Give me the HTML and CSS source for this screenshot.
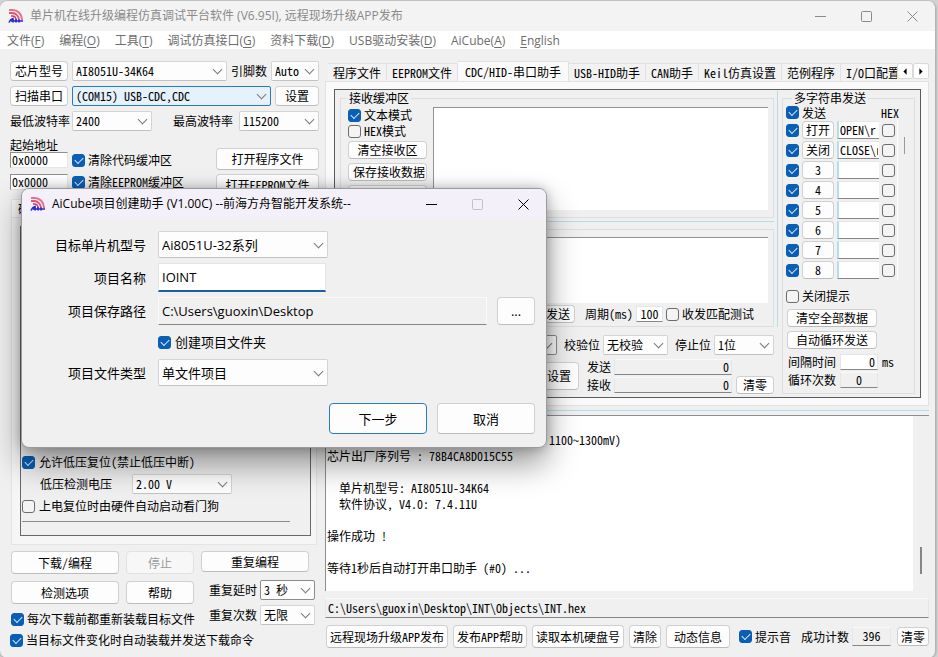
FILE: index.html
```html
<!DOCTYPE html>
<html lang="zh-CN">
<head>
<meta charset="utf-8">
<title>单片机在线升级编程仿真调试平台软件</title>
<link rel="stylesheet" href="styles.css">
</head>
<body>
<svg class="defs" aria-hidden="true">
  <symbol id="logo" viewBox="0 0 16 16">
    <g fill="none">
      <path d="M1 2H4.500A9.500 9.500 0 0 1 14 11.500V12" stroke="#e8708c" stroke-width="2"/>
      <path d="M1 5H4A7 7 0 0 1 11 12" stroke="#e0527a" stroke-width="1.800"/>
      <path d="M3 8H4.500A3.500 3.500 0 0 1 8 11.500" stroke="#c8386f" stroke-width="1.600"/>
      <path d="M1 14.500C2 12 3 11 5 10.500V14.500M8 11V14.500M11 11.500V14.500M3 13H15" stroke="#2229d0" stroke-width="1.600"/>
    </g>
  </symbol>
</svg>
<div class="window">
  <header class="titlebar">
    <svg class="logo"><use href="#logo"/></svg>
    <h1>单片机在线升级编程仿真调试平台软件 (V6.95I), 远程现场升级APP发布</h1>
    <div class="winbtns">
      <button aria-label="最小化"><svg viewBox="0 0 11 11"><path d="M0 5.5H11"/></svg></button>
      <button aria-label="最大化"><svg viewBox="0 0 11 11"><rect x=".5" y=".5" width="10" height="10" rx="1"/></svg></button>
      <button aria-label="关闭"><svg viewBox="0 0 11 11"><path d="M.5 .5L10.5 10.5M10.5 .5L.5 10.5"/></svg></button>
    </div>
  </header>
  <nav class="menubar">
    <a href="#">文件(<u>F</u>)</a><a href="#">编程(<u>O</u>)</a><a href="#">工具(<u>T</u>)</a><a href="#">调试仿真接口(<u>G</u>)</a><a href="#">资料下载(<u>D</u>)</a><a href="#">USB驱动安装(<u>D</u>)</a><a href="#">AiCube(<u>A</u>)</a><a href="#"><u>E</u>nglish</a>
  </nav>

  <main class="main">
    <section class="left">
      <div class="settings">
        <div class="row">
          <button class="btn w58">芯片型号</button>
          <span class="combo grow"><select aria-label="芯片型号"><option>AI8051U-34K64</option></select></span>
          <label for="pins">引脚数</label>
          <span class="combo w48"><select id="pins"><option>Auto</option></select></span>
        </div>
        <div class="row">
          <button class="btn w58">扫描串口</button>
          <span class="combo grow active"><select aria-label="串口"><option>(COM15) USB-CDC,CDC</option></select></span>
          <button class="btn w44">设置</button>
        </div>
        <div class="row">
          <label class="w58" for="minb">最低波特率</label>
          <span class="combo w80"><select id="minb"><option>2400</option></select></span>
          <label class="push" for="maxb">最高波特率</label>
          <span class="combo w80"><select id="maxb"><option>115200</option></select></span>
        </div>
      </div>
      <div class="address">
        <div class="addr-fields">
          <div class="caption">起始地址</div>
          <div class="row">
            <input class="field w58" aria-label="代码起始地址" value="0x0000">
            <label class="check"><input type="checkbox" checked>清除代码缓冲区</label>
          </div>
          <div class="row">
            <input class="field w58" aria-label="EEPROM起始地址" value="0x0000">
            <label class="check"><input type="checkbox" checked>清除EEPROM缓冲区</label>
          </div>
        </div>
        <div class="addr-buttons">
          <button class="btn">打开程序文件</button>
          <button class="btn">打开EEPROM文件</button>
        </div>
      </div>

      <div class="hardware">
        <div class="hw-tab">硬件选项</div>
        <div class="hw-page">
          <div class="hw-panel">
            <div class="hw-list">
              <label class="check"><input type="checkbox" checked>允许低压复位(禁止低压中断)</label>
              <div class="row hw-volt">
                <label for="volt">低压检测电压</label>
                <span class="combo w100"><select id="volt"><option>2.00 V</option></select></span>
              </div>
              <label class="check"><input type="checkbox">上电复位时由硬件自动启动看门狗</label>
            </div>
          </div>
        </div>
      </div>

      <div class="actions">
        <div class="act-main">
          <div class="act-grid">
            <button class="btn">下载/编程</button><button class="btn" disabled>停止</button>
            <button class="btn">检测选项</button><button class="btn">帮助</button>
          </div>
          <label class="check"><input type="checkbox" checked>每次下载前都重新装载目标文件</label>
        </div>
        <div class="act-repeat">
          <button class="btn">重复编程</button>
          <div class="row"><label for="delay">重复延时</label><span class="combo dark"><select id="delay"><option>3 秒</option></select></span></div>
          <div class="row"><label for="times">重复次数</label><span class="combo"><select id="times"><option>无限</option></select></span></div>
        </div>
      </div>
      <label class="check last"><input type="checkbox" checked>当目标文件变化时自动装载并发送下载命令</label>
    </section>

    <section class="right">
      <div class="tabs">
        <div class="tablist">
          <button>程序文件</button><button>EEPROM文件</button><button class="on">CDC/HID-串口助手</button><button>USB-HID助手</button><button>CAN助手</button><button>Keil仿真设置</button><button>范例程序</button><button class="cut">I/O口配置</button>
        </div>
        <div class="spin">
          <button aria-label="向左"><svg viewBox="0 0 5 8"><path d="M4.500 0V8L.5 4Z"/></svg></button>
          <button aria-label="向右"><svg viewBox="0 0 5 8"><path d="M.5 0V8L4.500 4Z"/></svg></button>
        </div>
      </div>
      <div class="page">
        <div class="serial">
          <div class="comm">
            <div class="buffers">
              <fieldset class="group recv">
                <legend>接收缓冲区</legend>
                <div class="recv-body">
                  <div class="recv-tools">
                    <label class="check"><input type="checkbox" checked>文本模式</label>
                    <label class="check"><input type="checkbox">HEX模式</label>
                    <button class="btn">清空接收区</button>
                    <button class="btn">保存接收数据</button>
                    <button class="btn">复制接收数据</button>
                  </div>
                  <textarea class="area" aria-label="接收缓冲区"></textarea>
                </div>
              </fieldset>
              <div class="splitter"></div>
              <div class="group send">
                <textarea class="area" aria-label="发送缓冲区"></textarea>
                <div class="row send-row">
                  <button class="btn auto">自动发送</button>
                  <label for="period">周期(ms)</label>
                  <input class="field num" id="period" value="100">
                  <label class="check"><input type="checkbox">收发匹配测试</label>
                </div>
              </div>
            </div>
            <div class="row port-row">
              <span class="combo dark w80"><select aria-label="波特率"><option></option></select></span>
              <label for="parity">校验位</label>
              <span class="combo w65"><select id="parity"><option>无校验</option></select></span>
              <label for="stop">停止位</label>
              <span class="combo w60"><select id="stop"><option>1位</option></select></span>
            </div>
            <div class="row count-row">
              <button class="btn setup">设置</button>
              <div class="counters">
                <label>发送<input class="field gray" value="0" readonly></label>
                <label>接收<input class="field gray" value="0" readonly></label>
              </div>
              <button class="btn clear">清零</button>
            </div>
          </div>
          <fieldset class="group multi">
            <legend>多字符串发送</legend>
            <div class="multi-head"><label class="check"><input type="checkbox" checked>发送</label><span>HEX</span></div>
            <div class="multi-list">
              <div class="multi-rows">
                <div class="mrow"><input type="checkbox" aria-label="启用 1" checked><button class="btn">打开</button><input class="field" aria-label="字符串 1" value="OPEN\r"><input type="checkbox" aria-label="HEX 1"></div>
                <div class="mrow"><input type="checkbox" aria-label="启用 2" checked><button class="btn">关闭</button><input class="field" aria-label="字符串 2" value="CLOSE\r"><input type="checkbox" aria-label="HEX 2"></div>
                <div class="mrow"><input type="checkbox" aria-label="启用 3" checked><button class="btn">3</button><input class="field" aria-label="字符串 3"><input type="checkbox" aria-label="HEX 3"></div>
                <div class="mrow"><input type="checkbox" aria-label="启用 4" checked><button class="btn">4</button><input class="field" aria-label="字符串 4"><input type="checkbox" aria-label="HEX 4"></div>
                <div class="mrow"><input type="checkbox" aria-label="启用 5" checked><button class="btn">5</button><input class="field" aria-label="字符串 5"><input type="checkbox" aria-label="HEX 5"></div>
                <div class="mrow"><input type="checkbox" aria-label="启用 6" checked><button class="btn">6</button><input class="field" aria-label="字符串 6"><input type="checkbox" aria-label="HEX 6"></div>
                <div class="mrow"><input type="checkbox" aria-label="启用 7" checked><button class="btn">7</button><input class="field" aria-label="字符串 7"><input type="checkbox" aria-label="HEX 7"></div>
                <div class="mrow"><input type="checkbox" aria-label="启用 8" checked><button class="btn">8</button><input class="field" aria-label="字符串 8"><input type="checkbox" aria-label="HEX 8"></div>
              </div>
              <i class="multi-thumb"></i>
            </div>
            <div class="multi-foot">
              <label class="check"><input type="checkbox">关闭提示</label>
              <button class="btn">清空全部数据</button>
              <button class="btn">自动循环发送</button>
              <div class="timing">
                <label>间隔时间<input class="field" value="0"><span>ms</span></label>
                <label>循环次数<input class="field gray mid" value="0" readonly></label>
              </div>
            </div>
          </fieldset>
        </div>
      </div>
      <div class="splitter wide"></div>
      <div class="log">
        <textarea readonly aria-label="输出信息">

                                     1100~1300mV)
芯片出厂序列号 : 78B4CA8D015C55

  单片机型号: AI8051U-34K64
  软件协议, V4.0: 7.4.11U

操作成功 !

等待1秒后自动打开串口助手 (#0) ...</textarea>
        <div class="scroll"><i></i></div>
      </div>
      <input class="field gray path" aria-label="目标文件" value="C:\Users\guoxin\Desktop\INT\Objects\INT.hex" readonly>
      <div class="footer">
        <button class="btn">远程现场升级APP发布</button>
        <button class="btn">发布APP帮助</button>
        <button class="btn">读取本机硬盘号</button>
        <button class="btn">清除</button>
        <button class="btn info">动态信息</button>
        <label class="check beep"><input type="checkbox" checked>提示音</label>
        <label class="total">成功计数<input class="field gray mid" value="396" readonly></label>
        <button class="btn small">清零</button>
      </div>
    </section>
  </main>
</div>

<div class="dialog" role="dialog" aria-labelledby="dlg-title">
  <header class="dlg-title">
    <svg class="logo"><use href="#logo"/></svg>
    <h2 id="dlg-title">AiCube项目创建助手 (V1.00C) --前海方舟智能开发系统--</h2>
    <div class="winbtns">
      <button aria-label="最小化"><svg viewBox="0 0 11 11"><path d="M0 5.500H11"/></svg></button>
      <button aria-label="最大化" disabled><svg viewBox="0 0 11 11"><rect x=".5" y=".5" width="10" height="10" rx="1"/></svg></button>
      <button aria-label="关闭"><svg viewBox="0 0 11 11"><path d="M.5 .5L10.500 10.500M10.500 .5L.5 10.500"/></svg></button>
    </div>
  </header>
  <form class="form">
    <label for="mcu">目标单片机型号</label>
    <span class="combo"><select id="mcu"><option>Ai8051U-32系列</option></select></span>
    <label for="name">项目名称</label>
    <input class="name" id="name" value="IOINT">
    <label for="dir">项目保存路径</label>
    <div class="dir"><input id="dir" value="C:\Users\guoxin\Desktop" readonly><button type="button" class="btn">...</button></div>
    <label class="check mkdir"><input type="checkbox" checked>创建项目文件夹</label>
    <label for="ftype">项目文件类型</label>
    <span class="combo"><select id="ftype"><option>单文件项目</option></select></span>
    <div class="dlg-actions">
      <button type="button" class="btn primary">下一步</button>
      <button type="button" class="btn">取消</button>
    </div>
  </form>
</div>
</body>
</html>
```
FILE: styles.css
```css
* { box-sizing: border-box; }
body {
  margin: 0;
  min-height: 100vh;
  display: flex;
  background: #d2d2d2;
  color: #000;
  font: 12px/14px "Noto Sans CJK SC", sans-serif;
  font-feature-settings: "hwid";
}
button, input, select, textarea { font: inherit; font-feature-settings: inherit; color: inherit; margin: 0; }
.defs { position: absolute; width: 0; height: 0; }
.window {
  flex: 1;
  min-width: 0;
  display: flex;
  flex-direction: column;
  margin: 1px 2px 2px 0;
  background: #f0f0f0;
  border: solid #b4b4b4;
  border-width: 0 1px 1px 0;
  border-radius: 8px;
  box-shadow: 0 0 0 1px #c0c0c0;
  overflow: hidden;
}

/* Title bars and menu */
.titlebar, .dlg-title { display: flex; align-items: center; gap: 6px; font-feature-settings: normal; font-family: "Open Sans", "Noto Sans CJK SC", sans-serif; }
.titlebar { height: 30px; padding-left: 8px; background: #f3f3f3; color: #8a8a8a; }
.titlebar h1, .dlg-title h2 { margin: 0; flex: 1; font-size: 12px; font-weight: 400; white-space: nowrap; }
.logo { width: 16px; height: 16px; flex: none; }
.winbtns { display: flex; }
.winbtns button { width: 46px; height: 30px; padding: 0; border: 0; background: none; display: grid; place-items: center; }
.winbtns button:disabled { color: #c4c0c8; }
.winbtns svg { width: 11px; height: 11px; fill: none; stroke: currentColor; }
.menubar { display: flex; gap: 15px; height: 18px; padding: 1px 0 0 7px; background: #fff; align-items: center; font-family: "Open Sans", "Noto Sans CJK SC", sans-serif; font-feature-settings: normal; }
.menubar a { color: #6d6d6d; text-decoration: none; white-space: nowrap; }
.menubar u { text-underline-offset: 2px; }

/* Shared controls */
.row { display: flex; align-items: center; gap: 3px; }
.row label, .check { white-space: nowrap; }
.grow { flex: 1; }
.push { margin-left: auto; }
.w44 { width: 44px; } .w48 { width: 48px; } .w58 { width: 58px; } .w60 { width: 60px; }
.w65 { width: 65px; } .w80 { width: 80px; } .w100 { width: 100px; }
.btn { height: 20px; padding: 0 4px; border: 1px solid #d0d0d0; border-bottom-color: #bcbcbc; border-radius: 4px; background: #fdfdfd; white-space: nowrap; flex: none; line-height: 14px; }
.btn:disabled { color: #9c9c9c; background: #f7f7f7; border-color: #e2e2e2; }
.combo { position: relative; display: inline-flex; height: 20px; min-width: 0; }
.combo select { appearance: none; width: 100%; height: 100%; padding: 0 3px; border: 1px solid #d4d4d4; border-bottom-color: #c2c2c2; border-radius: 2px; background: #fdfdfd; text-overflow: clip; }
.combo::after { content: ""; position: absolute; right: 6px; top: 50%; width: 6px; height: 6px; margin-top: -5px; border: solid #7a7a7a; border-width: 0 1px 1px 0; transform: rotate(45deg); pointer-events: none; }
.combo.active select { background: #e5f1fb; border-color: #2a7ac0; }
.combo.dark select { border-color: #8c8c8c; }
.field { height: 16px; min-width: 0; padding: 0 2px 2px; border: 1px solid #e6e6e6; border-bottom-color: #868686; background: #fff; border-radius: 0; }
.field.gray { background: #f0f0f0; border-top-color: #fafafa; text-align: right; }
.field.mid { text-align: center; }
.check { display: flex; align-items: center; gap: 3px; height: 16px; }
input[type=checkbox] { appearance: none; width: 13px; height: 13px; flex: none; border: 1px solid #6c6c6c; border-radius: 3px; background: #f4f4f4; display: grid; place-items: center; }
input[type=checkbox]:checked { background: #0a5fb4; border-color: #0a5fb4; }
input[type=checkbox]:checked::after { content: ""; width: 7px; height: 4px; border: solid #dceaf8; border-width: 0 0 1px 1px; transform: translateY(-1px) rotate(-45deg); }

/* Left column */
.main { flex: 1; display: flex; padding: 12px 6px 10px 10px; gap: 6px; }
.left { width: 309px; flex: none; display: flex; flex-direction: column; }
.settings { display: flex; flex-direction: column; gap: 5px; }
.settings .row { gap: 4px; }
.settings .push { margin-right: 2px; }
.address { display: flex; justify-content: space-between; margin-top: 7px; }
.addr-fields { display: flex; flex-direction: column; }
.addr-fields .row { height: 22px; gap: 4px; }
.addr-fields .field { padding: 0 1px 1px; border-top-color: #8e8e8e; border-bottom-color: #e6e6e6; border-left-color: #8e8e8e; }
.caption { height: 11px; }
.addr-buttons { display: flex; flex-direction: column; gap: 4px; padding-top: 10px; }
.addr-buttons .btn { width: 103px; height: 22px; }
.hardware { flex: 1; display: flex; flex-direction: column; margin: 3px 2px 0 1px; }
.hw-tab { width: 62px; height: 18px; padding: 2px 6px; background: #f9f9f9; border: 1px solid #e4e4e4; border-bottom: 0; }
.hw-page { flex: 1; display: flex; padding: 8px; background: #f6f6f6; border: 1px solid #e4e4e4; }
.hw-panel { flex: 1; display: flex; align-items: flex-end; padding: 0 20px 13px 1px; background: #f0f0f0; border: 1px solid #686868; margin-right: -3px; }
.hw-list { flex: 1; display: flex; flex-direction: column; gap: 4px; padding-bottom: 7px; border-bottom: 1px solid #8c8c8c; }
.hw-list .check { gap: 4px; }
.hw-volt { gap: 20px; padding-left: 18px; }
.actions { display: flex; justify-content: space-between; margin-top: 6px; padding-left: 1px; }
.act-main { width: 183px; }
.act-grid { display: grid; grid-template-columns: 108px 68px; gap: 7px; margin-bottom: 7px; }
.act-grid .btn { height: 23px; }
.act-repeat { width: 114px; display: flex; flex-direction: column; gap: 5px; margin-right: 4px; }
.act-repeat > .btn { width: 108px; height: 21px; margin-bottom: 3px; }
.act-repeat .row { justify-content: flex-end; }
.act-repeat .combo { width: 55px; }
.last { margin-top: 5px; }

/* Right column: tabs */
.right { flex: 1; min-width: 0; display: flex; flex-direction: column; }
.tabs { display: flex; height: 20px; padding-left: 3px; }
.tablist { flex: 1; display: flex; min-width: 0; overflow: hidden; align-items: flex-end; }
.tablist button { height: 18px; padding: 0 5px; border: 1px solid #e2e2e2; border-width: 1px 1px 0 0; background: #f2f2f2; white-space: nowrap; flex: none; line-height: 14px; }
.tablist .on { height: 20px; padding: 0 7px; background: #fafafa; }
.spin { display: flex; flex: none; align-self: center; }
.spin button { width: 16px; height: 16px; padding: 0; border: 1px solid #dadada; background: #fff; display: grid; place-items: center; border-radius: 2px; }
.spin svg { width: 4px; height: 7px; }
.page { padding: 7px 7px 7px 8px; background: #fafafa; border: 1px solid #e2e2e2; }
.serial { display: flex; border: 1px solid #5c5c5c; background: #f0f0f0; padding: 1px 5px 3px; gap: 4px; }
.comm { flex: 1; min-width: 0; }
.buffers { padding-right: 3px; border-right: 1px solid #b4dcea; }
.group { margin: 0; min-width: 0; border: 1px solid #dedede; padding: 0; }
.group legend { padding: 0 2px; margin-left: 6px; height: 14px; }
.recv-body { display: flex; gap: 6px; height: 112px; padding: 2px 5px 7px 7px; }
.recv-tools { width: 79px; overflow: hidden; flex: none; display: flex; flex-direction: column; gap: 4px; }
.recv-tools .check { height: 16px; margin-bottom: -4px; }
.recv-tools .btn { height: 18px; }
.recv-tools .check + .btn { margin-top: 2px; }
.area { flex: 1; min-width: 0; resize: none; border: solid #929292; border-width: 1px 0 0 1px; background: #fff; }
.splitter { height: 1px; margin: 3px 0 7px; background: #b4dcea; }
.send { padding: 7px 5px 1px 7px; }
.send .area { display: block; width: 100%; height: 66px; }
.send-row { justify-content: flex-end; padding-right: 14px; height: 22px; gap: 3px; }
.auto { height: 18px; margin-right: 7px; }
.num { width: 27px; text-align: center; }
.port-row { justify-content: flex-end; padding: 8px 4px 3px 0; }
.port-row label { margin-left: 4px; }
.count-row { justify-content: flex-end; padding-right: 4px; gap: 4px; height: 36px; }
.setup { width: 40px; height: 28px; margin-right: 4px; }
.counters label { display: flex; gap: 3px; align-items: center; height: 18px; }
.counters .field { width: 118px; }
.clear { height: 18px; width: 38px; align-self: flex-end; }

/* Multi-string panel */
.multi { width: 133px; flex: none; padding: 0 3px; }
.multi-head { display: flex; justify-content: space-between; align-items: center; height: 15px; padding-right: 12px; }
.multi-list { display: flex; justify-content: space-between; }
.multi-rows { border-right: 1px solid #fff; padding-right: 2px; }
.mrow { display: flex; align-items: center; height: 20px; gap: 3px; }
.mrow .btn { width: 32px; height: 18px; padding: 0; }
.mrow .field { width: 42px; height: 18px; padding: 0 1px 2px; border-left: 2px solid #b4dcea; border-right: 0; }
.multi-thumb { width: 1px; height: 17px; margin: 17px 6px 0 0; background: #9a9a9a; }
.multi-foot { display: flex; flex-direction: column; align-items: flex-start; gap: 4px; padding-top: 8px; }
.multi-foot > .btn { width: 90px; height: 18px; margin-left: 1px; }
.multi-foot > .check { margin-bottom: 1px; }
.timing label { display: flex; align-items: center; gap: 4px; height: 18px; padding-left: 2px; white-space: nowrap; }
.timing .field { width: 38px; text-align: right; }
.timing .field.mid { text-align: center; }

/* Output area */
.splitter.wide { margin: 4px 0; }
.log { flex: 1; display: flex; border: solid #8e8e8e; border-width: 1px 0 0 1px; background: #fff; min-height: 176px; }
.log textarea { flex: 1; border: 0; padding: 0 1px; resize: none; background: #fff; line-height: 16px; overflow: hidden; white-space: pre; outline: 0; }
.scroll { width: 16px; background: #f0f0f0; display: flex; flex-direction: column; justify-content: flex-end; align-items: center; padding-bottom: 17px; }
.scroll i { width: 2px; height: 27px; background: #868686; }
.field.path { height: 20px; margin-top: 7px; text-align: left; }
.footer { display: flex; align-items: center; gap: 5px; margin-top: 7px; padding-left: 1px; }
.footer .btn { height: 23px; padding: 0 3px; }
.footer .info { padding: 0 7px; }
.footer .small { height: 19px; margin-left: auto; }
.beep { margin-left: 4px; }
.total { display: flex; align-items: center; gap: 3px; margin-left: 5px; white-space: nowrap; }
.total .field { width: 39px; height: 19px; }

/* Project wizard */
.dialog {
  position: absolute;
  left: 21px;
  top: 188px;
  width: 526px;
  border: 1px solid #9b9b9b;
  border-radius: 8px;
  background: #f0f0f0;
  box-shadow: 0 16px 32px rgba(0, 0, 0, .4), 0 0 12px rgba(0, 0, 0, .25);
  overflow: hidden;
  font: 13px/18px "Open Sans", "Noto Sans CJK SC", sans-serif;
  font-feature-settings: normal;
}
.dlg-title { height: 30px; padding-left: 8px; background: #f4f0f9; }
.form { display: grid; grid-template-columns: 124px 1fr; column-gap: 12px; row-gap: 5px; align-items: center; padding: 12px 11px 13px 0; }
.form > label { text-align: right; }
.form .combo { width: 170px; height: 27px; }
.name { width: 168px; height: 29px; padding: 0 3px 1px; border: 1px solid #e6e6e6; border-bottom: 2px solid #1d5fa3; background: #fff; outline: 0; }
.dir { display: flex; gap: 10px; }
.dir input { flex: 1; min-width: 0; height: 28px; padding: 0 3px 1px; border: 1px solid #fafafa; border-bottom-color: #868686; background: #f0f0f0; }
.dir .btn { width: 38px; height: 28px; }
.form .mkdir { grid-column: 2; justify-self: start; height: 24px; gap: 4px; }
.dlg-actions { grid-column: 1 / -1; display: flex; justify-content: flex-end; gap: 10px; margin-top: 12px; }
.dlg-actions .btn { width: 98px; height: 31px; }
.btn.primary { border-color: #2a7ac0; }
```
